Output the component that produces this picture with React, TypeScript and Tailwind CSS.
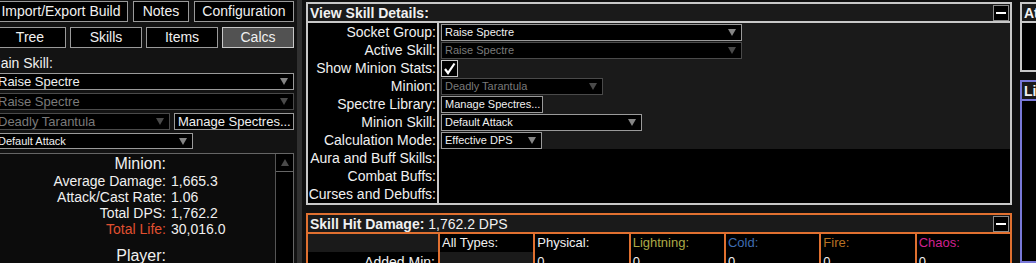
import clsx from 'clsx';

const Arrow = ({ dim, up }: { dim?: boolean; up?: boolean }) => (
  <svg width="8" height="7" viewBox="0 0 8 7" className="shrink-0">
    <path d={up ? 'M4 0L8 7H0Z' : 'M0 0H8L4 7Z'} fill={dim ? '#4a4a4a' : '#858585'} />
  </svg>
);

const Select = ({ text, dim, small, className }: { text: string; dim?: boolean; small?: boolean; className?: string }) => (
  <div
    className={clsx(
      'flex items-center justify-between bg-black border pl-[3px] pr-[5px] overflow-hidden',
      dim ? 'border-[#4a4a4a] text-[#7a7a7a]' : 'border-[#9a9a9a] text-[#f0f0f0]',
      small ? 'text-[11px]' : 'text-[13px]',
      className,
    )}
  >
    <span className="whitespace-nowrap leading-none">{text}</span>
    <Arrow dim={dim} />
  </div>
);

const Button = ({ label, active, className }: { label: string; active?: boolean; className?: string }) => (
  <div
    className={clsx(
      'flex items-center justify-center border text-[14px] whitespace-nowrap',
      active ? 'bg-[#525252] border-[#c8c8c8]' : 'bg-black border-[#9a9a9a]',
      className,
    )}
  >
    {label}
  </div>
);

const Collapse = () => (
  <div className="w-[16px] h-[16px] mr-[1px] border border-[#8a8a8a] bg-black flex items-center justify-center">
    <div className="w-[10px] h-[2px] bg-white" />
  </div>
);

const stats = [
  { label: 'Average Damage:', value: '1,665.3' },
  { label: 'Attack/Cast Rate:', value: '1.06' },
  { label: 'Total DPS:', value: '1,762.2' },
  { label: 'Total Life:', value: '30,016.0', life: true },
];

const details = [
  'Socket Group:',
  'Active Skill:',
  'Show Minion Stats:',
  'Minion:',
  'Spectre Library:',
  'Minion Skill:',
  'Calculation Mode:',
  'Aura and Buff Skills:',
  'Combat Buffs:',
  'Curses and Debuffs:',
];

const damageCols = [
  { name: 'All Types:', color: 'text-[#f0f0f0]', value: '', grey: true },
  { name: 'Physical:', color: 'text-[#f0f0f0]', value: '0' },
  { name: 'Lightning:', color: 'text-[#adaa47]', value: '0' },
  { name: 'Cold:', color: 'text-[#3f6db3]', value: '0' },
  { name: 'Fire:', color: 'text-[#b97123]', value: '0' },
  { name: 'Chaos:', color: 'text-[#d02090]', value: '0' },
];

export default function App() {
  return (
    <div className="w-[1036px] h-[263px] overflow-hidden flex bg-[#101010] text-[#f0f0f0] font-['Liberation_Sans',Arial,sans-serif]">
      {/* side panel */}
      <div className="w-[297px] shrink-0 h-full overflow-hidden bg-[#131313]">
        <div className="-ml-[6px] w-[300px] flex flex-col">
          <div className="mt-[1px] flex gap-[5px] h-[21px]">
            <Button label="Import/Export Build" className="w-[134px]" />
            <Button label="Notes" className="w-[56px]" />
            <Button label="Configuration" className="w-[100px]" />
          </div>
          <div className="mt-[5px] flex gap-[4px] h-[21px]">
            <Button label="Tree" className="w-[72px]" />
            <Button label="Skills" className="w-[72px]" />
            <Button label="Items" className="w-[72px]" />
            <Button label="Calcs" active className="w-[72px]" />
          </div>
          <div className="mt-[7px] -ml-[5px] h-[16px] leading-[16px] text-[14px]">Main Skill:</div>
          <Select text="Raise Spectre" className="mt-[2px] h-[17px]" />
          <Select text="Raise Spectre" dim className="mt-[3px] h-[17px]" />
          <div className="mt-[3px] flex gap-[4px] h-[17px]">
            <Select text="Deadly Tarantula" dim className="w-[176px]" />
            <div className="w-[120px] border border-[#9a9a9a] bg-black text-[13px] leading-none flex items-center pl-[3px] whitespace-nowrap">
              Manage Spectres...
            </div>
          </div>
          <Select text="Default Attack" small className="mt-[3px] h-[16px] w-[199px]" />
          <div className="mt-[4px] h-[130px] flex border border-[#666] bg-[#0c0c0c]">
            <div className="flex-1 pt-[1px]">
              <div className="flex h-[18px] leading-[18px]">
                <span className="w-[171px] text-right text-[16px]">Minion:</span>
              </div>
              {stats.map(s => (
                <div key={s.label} className="flex h-[16px] leading-[16px] text-[14px] whitespace-nowrap">
                  <span className={clsx('w-[171px] text-right', s.life && 'text-[#e05030]')}>{s.label}</span>
                  <span className="pl-[5px]">{s.value}</span>
                </div>
              ))}
              <div className="flex mt-[10px] h-[18px] leading-[18px]">
                <span className="w-[171px] text-right text-[16px]">Player:</span>
              </div>
            </div>
            <div className="w-[18px] border-l border-[#555] bg-black">
              <div className="h-[18px] border-b border-[#666] flex items-center justify-center">
                <Arrow up dim />
              </div>
            </div>
          </div>
        </div>
      </div>

      {/* splitter */}
      <div className="w-[5px] shrink-0 bg-[#303030]" />

      {/* calcs */}
      <div className="w-[710px] shrink-0 pl-[4px] flex flex-col">
        <div className="mt-[2px] w-[706px] border-2 border-[#c8c8c8] bg-black">
          <div className="h-[19px] flex items-center justify-between bg-[#1a1a1a] border-b-2 border-[#c8c8c8]">
            <span className="pl-[2px] text-[14px] font-bold leading-none">View Skill Details:</span>
            <Collapse />
          </div>
          <div className="flex">
            <div className="w-[131px] border-r-2 border-[#c8c8c8] bg-black">
              {details.map(d => (
                <div key={d} className="h-[18px] leading-[18px] text-[14px] text-right pr-[1px] whitespace-nowrap">
                  {d}
                </div>
              ))}
            </div>
            <div className="flex-1">
              <div className="bg-[#1a1a1a]">
                <div className="h-[18px] pt-[1px] pl-[2px]">
                  <Select text="Raise Spectre" small className="w-[301px] h-[17px]" />
                </div>
                <div className="h-[18px] pt-[1px] pl-[2px]">
                  <Select text="Raise Spectre" small dim className="w-[301px] h-[17px]" />
                </div>
                <div className="h-[18px] pt-[1px] pl-[2px]">
                  <div className="w-[17px] h-[17px] border border-[#c8c8c8] bg-black flex items-center justify-center">
                    <svg width="13" height="13" viewBox="0 0 13 13">
                      <path d="M2 7L5 11L11.5 1.5" stroke="#ffffff" strokeWidth="2.2" fill="none" />
                    </svg>
                  </div>
                </div>
                <div className="h-[18px] pt-[1px] pl-[2px]">
                  <Select text="Deadly Tarantula" small dim className="w-[162px] h-[17px]" />
                </div>
                <div className="h-[18px] pt-[1px] pl-[2px]">
                  <div className="w-[102px] h-[17px] border border-[#9a9a9a] bg-black text-[11px] leading-none flex items-center pl-[3px] whitespace-nowrap">
                    Manage Spectres...
                  </div>
                </div>
                <div className="h-[18px] pt-[1px] pl-[2px]">
                  <Select text="Default Attack" small className="w-[201px] h-[17px]" />
                </div>
                <div className="h-[18px] pt-[1px] pl-[2px]">
                  <Select text="Effective DPS" small className="w-[101px] h-[17px]" />
                </div>
              </div>
              <div className="h-[54px] bg-black" />
            </div>
          </div>
        </div>

        <div className="mt-[8px] w-[706px] border-2 border-[#e07030] bg-black">
          <div className="h-[19px] flex items-center justify-between bg-[#1a1a1a] border-b-2 border-[#e07030]">
            <span className="pl-[2px] text-[14px] leading-none whitespace-nowrap">
              <span className="font-bold">Skill Hit Damage:</span> 1,762.2 DPS
            </span>
            <Collapse />
          </div>
          <div className="flex">
            <div className="w-[132px] border-r-2 border-[#e07030]">
              <div className="h-[18px] bg-[#1a1a1a]" />
              <div className="h-[18px] leading-[20px] text-[14px] text-right pr-[3px] bg-black">Added Min:</div>
            </div>
            {damageCols.map((c, i) => (
              <div key={c.name} className={clsx('flex-1', i < damageCols.length - 1 && 'border-r-2 border-[#e07030]')}>
                <div className={clsx('h-[18px] leading-[18px] text-[13px] pl-[2px] bg-black', c.color)}>{c.name}</div>
                <div className={clsx('h-[18px] leading-[20px] text-[13px] pl-[2px]', c.grey ? 'bg-[#1a1a1a]' : 'bg-black')}>
                  {c.value}
                </div>
              </div>
            ))}
          </div>
        </div>
      </div>

      {/* right column */}
      <div className="pl-[8px] shrink-0 flex flex-col">
        <div className="mt-[2px] w-[300px] h-[77px] border-2 border-[#c8c8c8] bg-black">
          <div className="h-[19px] flex items-center bg-[#1a1a1a] border-b-2 border-[#c8c8c8]">
            <span className="pl-[2px] text-[14px] font-bold leading-none">Attributes</span>
          </div>
        </div>
        <div className="mt-[8px] w-[300px] h-[200px] border-2 border-[#7878d8] bg-black">
          <div className="h-[19px] flex items-center bg-[#1a1a1a] border-b-2 border-[#7878d8]">
            <span className="pl-[2px] text-[14px] font-bold leading-none">Life</span>
          </div>
        </div>
      </div>
    </div>
  );
}
